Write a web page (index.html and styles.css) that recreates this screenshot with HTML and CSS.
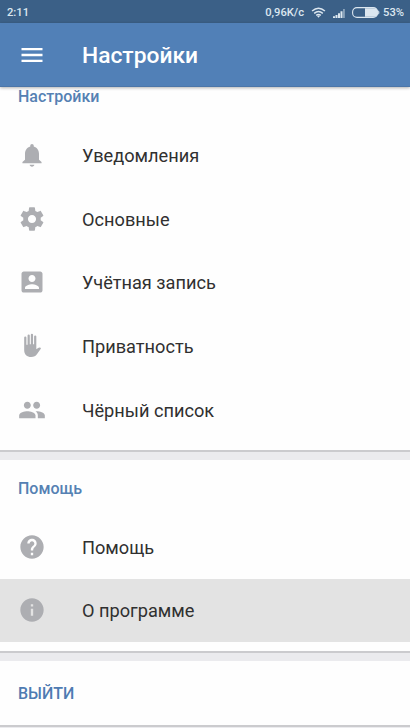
FILE: index.html
```html
<!DOCTYPE html>
<html lang="ru">
<head>
<meta charset="utf-8">
<title>Настройки</title>
<link rel="stylesheet" href="styles.css">
</head>
<body>
<div class="status">
  <span class="time">2:11</span>
  <span class="speed">0,96K/c</span>
  <svg class="wifi" viewBox="0 0 16 12"><g fill="none" stroke="currentColor" stroke-width="1.6"><path d="M1 4.4Q8-1.6 15 4.4"/><path d="M3.3 6.9Q8 2.9 12.7 6.9"/><path d="M5.5 9.2Q8 7.2 10.5 9.2"/></g><path d="M6.4 9.8Q8 8.6 9.6 9.8L8 11.6z" fill="currentColor"/></svg>
  <svg class="signal" viewBox="0 0 12 9" fill="currentColor"><path d="M0 7.2h2V9H0zM2.5 6h2v3h-2zM5 4.2h2V9H5zM7.5 2.2h2V9h-2z"/><path d="M10.2 0h1.5v9h-1.5z" opacity=".6"/></svg>
  <svg class="battery" viewBox="0 0 28 11"><rect x=".6" y=".6" width="25" height="9.8" rx="4.4" fill="none" stroke="currentColor" stroke-width="1.1"/><path d="M13 1.2h9.5a3 3 0 0 1 3 3v2.6a3 3 0 0 1-3 3H13zM26.2 3.4q1.2 0 1.2 2.1t-1.2 2.1z" fill="currentColor"/></svg>
  <span class="percent">53%</span>
</div>
<header class="toolbar">
  <svg class="menu" viewBox="0 0 24 24"><path d="M3 18h18v-2H3v2zm0-5h18v-2H3v2zm0-7v2h18V6H3z"/></svg>
  <h1>Настройки</h1>
</header>
<main>
  <section class="card">
    <h2 class="scrolled">Настройки</h2>
    <div class="row"><svg viewBox="0 0 24 24"><path d="M12 22c1.1 0 2-.7 2-1.6h-4c0 .9.9 1.6 2 1.6zm6-6v-5c0-3.07-1.63-5.64-4.5-6.32V4c0-.83-.67-1.5-1.5-1.5s-1.5.67-1.5 1.5v.68C7.64 5.36 6 7.92 6 11v5l-2.2 2v1h16.4v-1L18 16z"/></svg><span>Уведомления</span></div>
    <div class="row"><svg viewBox="0 0 24 24"><path d="M19.43 12.98c.04-.32.07-.64.07-.98s-.03-.66-.07-.98l2.11-1.65c.19-.15.24-.42.12-.64l-2-3.46c-.12-.22-.39-.3-.61-.22l-2.49 1c-.52-.4-1.08-.73-1.69-.98l-.38-2.65C14.46 2.18 14.25 2 14 2h-4c-.25 0-.46.18-.49.42l-.38 2.65c-.61.25-1.17.59-1.69.98l-2.49-1c-.23-.09-.49 0-.61.22l-2 3.46c-.13.22-.07.49.12.64l2.11 1.65c-.04.32-.07.65-.07.98s.03.66.07.98l-2.11 1.65c-.19.15-.24.42-.12.64l2 3.46c.12.22.39.3.61.22l2.49-1c.52.4 1.08.73 1.69.98l.38 2.65c.03.24.24.42.49.42h4c.25 0 .46-.18.49-.42l.38-2.65c.61-.25 1.17-.59 1.69-.98l2.49 1c.23.09.49 0 .61-.22l2-3.46c.12-.22.07-.49-.12-.64l-2.11-1.65zM12 15.5c-1.93 0-3.5-1.57-3.5-3.5s1.57-3.5 3.5-3.5 3.5 1.57 3.5 3.5-1.57 3.5-3.5 3.5z"/></svg><span>Основные</span></div>
    <div class="row"><svg viewBox="0 0 24 24"><path d="M3 5v14c0 1.1.89 2 2 2h14c1.1 0 2-.9 2-2V5c0-1.1-.9-2-2-2H5c-1.11 0-2 .9-2 2zm12 4c0 1.66-1.34 3-3 3s-3-1.34-3-3 1.34-3 3-3 3 1.34 3 3zm-9 8c0-2 4-3.1 6-3.1s6 1.1 6 3.1v1H6v-1z"/></svg><span>Учётная запись</span></div>
    <div class="row"><svg viewBox="0 0 24 24"><path d="M5.3 4.8a.95.95 0 0 1 1.9 0V11h1V3a.95.95 0 0 1 1.9 0v7.6h.9V2.4a.95.95 0 0 1 1.9 0v8.2h.9V3.9a.95.95 0 0 1 1.9 0v10.9l.9-.6c.7-.5 1.4-1 2.1-1 .9 0 1.2.7.7 1.4l-3.2 4.5c-1.1 1.5-2.5 2.4-4.9 2.4-3.6 0-6-2.2-6-5.8z"/></svg><span>Приватность</span></div>
    <div class="row"><svg viewBox="0 0 24 24"><path d="M16 11c1.66 0 2.99-1.34 2.99-3S17.66 5 16 5s-3 1.34-3 3 1.34 3 3 3zm-8 0c1.66 0 2.99-1.34 2.99-3S9.66 5 8 5 5 6.34 5 8s1.34 3 3 3zm0 2c-2.33 0-7 1.17-7 3.5V19h14v-2.5c0-2.33-4.67-3.5-7-3.5zm8 0c-.29 0-.62.02-.97.05 1.16.84 1.97 1.97 1.97 3.45V19h6v-2.5c0-2.33-4.67-3.5-7-3.5z"/></svg><span>Чёрный список</span></div>
  </section>
  <section class="card help">
    <h2>Помощь</h2>
    <div class="row"><svg viewBox="0 0 24 24"><path d="M12 2C6.48 2 2 6.48 2 12s4.48 10 10 10 10-4.48 10-10S17.52 2 12 2zm1 17h-2v-2h2v2zm2.07-7.75l-.9.92C13.45 12.9 13 13.5 13 15h-2v-.5c0-1.1.45-2.1 1.17-2.83l1.24-1.26c.37-.36.59-.86.59-1.41 0-1.1-.9-2-2-2s-2 .9-2 2H8c0-2.21 1.79-4 4-4s4 1.79 4 4c0 .88-.36 1.68-.93 2.25z"/></svg><span>Помощь</span></div>
    <div class="row pressed"><svg viewBox="0 0 24 24"><path d="M12 2C6.48 2 2 6.48 2 12s4.48 10 10 10 10-4.48 10-10S17.52 2 12 2zm1 15h-2v-6h2v6zm0-8h-2V7h2v2z"/></svg><span>О программе</span></div>
  </section>
  <section class="card logout"><span>ВЫЙТИ</span></section>
</main>
</body>
</html>
```
FILE: styles.css
```css
* { box-sizing: border-box; }
body {
  margin: 0;
  height: 728px;
  overflow: hidden;
  display: flex;
  flex-direction: column;
  background: #ebebee;
  font-family: Roboto, "Noto Sans", sans-serif;
}
svg { display: block; flex: none; }
.status {
  flex: none;
  height: 23px;
  display: flex;
  align-items: center;
  padding: 1px 6px 0 7px;
  background: #3b6087;
  color: #dce7f0;
  font-size: 11.2px;
  font-weight: 500;
}
.time { margin-right: auto; }
.wifi { width: 15px; height: 11px; margin-left: 7px; }
.signal { width: 12px; height: 9px; margin: 2px 0 0 7px; }
.battery { width: 28px; height: 11px; margin-left: 7px; }
.percent { margin-left: 3px; }
.toolbar {
  flex: none;
  height: 64px;
  display: flex;
  align-items: center;
  padding: 1px 18px 0;
  background: #5180b7;
  color: #fff;
  border-bottom: 1px solid #4c76a8;
  box-shadow: 0 1px 3px rgba(0, 0, 0, .3);
  position: relative;
}
.menu { width: 28px; height: 28px; fill: #fff; }
h1 { margin: 1px 0 0 36px; font-size: 22.8px; font-weight: 500; }
main { display: flex; flex-direction: column; gap: 8px; }
.card {
  flex: none;
  background: #fefefe;
  border-bottom: 2px solid #cbcbce;
  padding-bottom: 8px;
}
.help { padding-bottom: 9px; }
h2 {
  margin: 0;
  height: 55px;
  padding-left: 18px;
  line-height: 57px;
  font-size: 16px;
  font-weight: 500;
  color: #5581b3;
}
h2.scrolled { height: 36px; line-height: 20px; }
.row {
  height: 63.75px;
  display: flex;
  align-items: center;
  gap: 36px;
  padding: 1px 0 0 18px;
  font-size: 18.2px;
  color: #303030;
}
.row svg { width: 28px; height: 28px; margin-top: -1px; fill: #adaeb2; }
.pressed { background: #e3e3e3; }
.logout {
  height: 66px;
  padding: 1px 18px 0;
  display: flex;
  align-items: center;
  font-size: 16px;
  font-weight: 500;
  color: #4e7bb2;
}
```
